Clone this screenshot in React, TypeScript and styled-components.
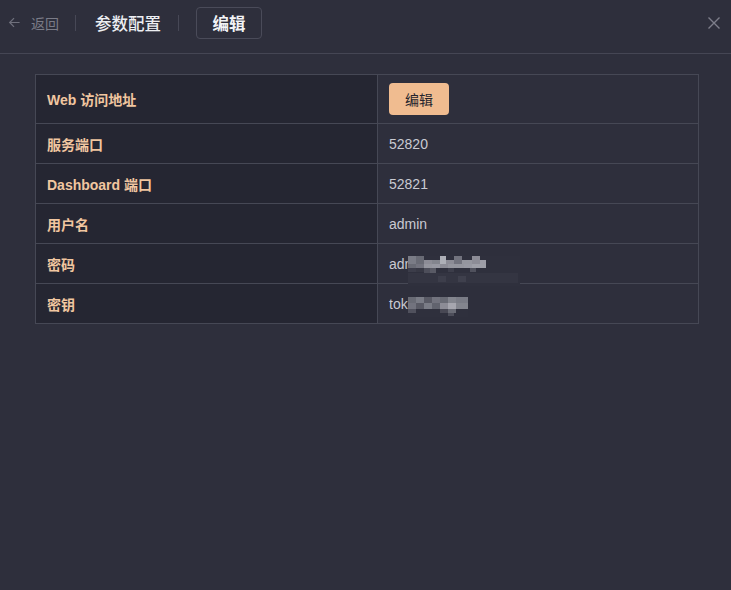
import React from "react";
import styled, { createGlobalStyle } from "styled-components";

const Global = createGlobalStyle`
  html, body { margin: 0; padding: 0; background: #2e2f3c; }
  body { font-family: "Liberation Sans", "Noto Sans CJK SC", sans-serif; }
  * { box-sizing: border-box; }
`;

const Page = styled.div`
  width: 731px;
  height: 590px;
  background: #2e2f3c;
  display: flex;
  flex-direction: column;
`;

const Header = styled.div`
  height: 54px;
  border-bottom: 1px solid #454654;
  display: flex;
  align-items: center;
  padding: 0 10px 8px 8px;
`;

const Back = styled.div`
  display: flex;
  align-items: center;
  gap: 10px;
  color: #7b7c88;
  font-size: 14px;
  font-family: "Noto Sans CJK SC", sans-serif;
`;

const Divider = styled.div<{ $l: number; $r: number }>`
  width: 1px;
  height: 16px;
  background: #474856;
  margin: 0 ${(p) => p.$r}px 0 ${(p) => p.$l}px;
`;

const Title = styled.div`
  color: #eceef2;
  font-size: 16.5px;
  font-weight: 500;
  font-family: "Noto Sans CJK SC", sans-serif;
`;

const Tab = styled.div`
  width: 66px;
  height: 32px;
  border: 1px solid #4a4b59;
  border-radius: 4px;
  display: flex;
  align-items: center;
  justify-content: center;
  color: #f2f3f6;
  font-size: 16.5px;
  font-weight: 700;
  font-family: "Noto Sans CJK SC", sans-serif;
`;

const Close = styled.div`
  margin-left: auto;
  display: flex;
  align-items: center;
`;

const Body = styled.div`
  padding: 20px 32px 0 35px;
`;

const Table = styled.div`
  width: 664px;
  border: 1px solid #464855;
  border-bottom: none;
  display: grid;
  grid-template-columns: 342px 1fr;
`;

const Label = styled.div<{ $h: number }>`
  height: ${(p) => p.$h}px;
  background: #252632;
  border-right: 1px solid #464855;
  border-bottom: 1px solid #464855;
  display: flex;
  align-items: center;
  padding-left: 11px;
  color: #f1c6a0;
  font-size: 14px;
  font-weight: 700;
`;

const Value = styled.div<{ $h: number }>`
  position: relative;
  height: ${(p) => p.$h}px;
  border-bottom: 1px solid #464855;
  display: flex;
  align-items: center;
  padding-left: 11px;
  color: #c9cad2;
  font-size: 14px;
`;

const EditButton = styled.button`
  width: 60px;
  height: 32px;
  border: none;
  border-radius: 4px;
  background: #f0bc90;
  color: #24252e;
  font-family: "Noto Sans CJK SC", sans-serif;
  font-size: 14px;
  cursor: pointer;
`;

const Mosaic = styled.svg`
  position: absolute;
  display: block;
`;

type Block = [number, number, number, number, number];

const pwBlocks: Block[] = [
  [0, 0, 8, 8, 0.45], [8, 0, 8, 8, 0.35], [16, 4, 8, 4, 0.55], [24, 4, 8, 4, 0.5],
  [32, 0, 6, 8, 0.75], [38, 4, 8, 4, 0.55], [46, 0, 8, 8, 0.4], [54, 4, 10, 4, 0.6],
  [64, 0, 8, 8, 0.55], [72, 4, 6, 4, 0.65], [0, 8, 8, 4, 0.35], [8, 8, 8, 4, 0.4],
  [16, 8, 8, 4, 0.6], [24, 8, 8, 4, 0.62], [32, 8, 8, 4, 0.55], [40, 8, 8, 4, 0.6],
  [48, 8, 8, 4, 0.6], [56, 8, 8, 4, 0.62], [64, 8, 14, 4, 0.66],
  [0, 12, 8, 4, 0.08], [8, 12, 8, 4, 0.05], [16, 12, 6, 5, 0.18], [22, 12, 6, 5, 0.25],
  [40, 12, 6, 4, 0.08], [62, 12, 6, 4, 0.2],
  [0, 17, 110, 10, 0.03], [30, 20, 8, 6, 0.06], [50, 20, 8, 6, 0.07],
];

const tkBlocks: Block[] = [
  [0, 0, 8, 6, 0.35], [8, 0, 8, 6, 0.45], [16, 0, 8, 6, 0.25], [24, 0, 8, 6, 0.4],
  [32, 0, 8, 6, 0.35], [40, 0, 8, 6, 0.5], [48, 0, 12, 6, 0.45],
  [0, 6, 8, 6, 0.4], [8, 6, 8, 6, 0.25], [16, 6, 8, 6, 0.45], [24, 6, 8, 6, 0.3],
  [32, 6, 8, 6, 0.55], [40, 6, 8, 6, 0.7], [48, 6, 12, 6, 0.5],
  [0, 12, 8, 4, 0.2], [32, 12, 8, 4, 0.15], [40, 12, 8, 4, 0.35], [40, 16, 6, 3, 0.18],
];

function Blocks({ blocks, w, h, style }: { blocks: Block[]; w: number; h: number; style: React.CSSProperties }) {
  return (
    <Mosaic width={w} height={h} viewBox={`0 0 ${w} ${h}`} style={style}>
      <rect x={0} y={0} width={w} height={h} fill="#2f303d" />
      {blocks.map(([x, y, bw, bh, l], i) => (
        <rect key={i} x={x} y={y} width={bw} height={bh} fill="#d8d9e0" fillOpacity={l} />
      ))}
    </Mosaic>
  );
}

const rows = [
  { label: "Web 访问地址", h: 49, kind: "button" },
  { label: "服务端口", h: 40, value: "52820" },
  { label: "Dashboard 端口", h: 40, value: "52821" },
  { label: "用户名", h: 40, value: "admin" },
  { label: "密码", h: 40, kind: "pw" },
  { label: "密钥", h: 40, kind: "tk" },
];

export default function App() {
  return (
    <Page>
      <Global />
      <Header>
        <Back>
          <svg width="13" height="13" viewBox="0 0 14 14" fill="none" stroke="#6f707c" strokeWidth="1.3">
            <path d="M12.5 7H1.8M6.5 2.3L1.8 7l4.7 4.7" />
          </svg>
          <span>返回</span>
        </Back>
        <Divider $l={16} $r={19} />
        <Title>参数配置</Title>
        <Divider $l={17} $r={17} />
        <Tab>编辑</Tab>
        <Close>
          <svg width="14" height="14" viewBox="0 0 14 14" stroke="#7d7e8a" strokeWidth="1.4">
            <path d="M1.5 1.5l11 11M12.5 1.5l-11 11" />
          </svg>
        </Close>
      </Header>
      <Body>
        <Table>
          {rows.map((r) => (
            <React.Fragment key={r.label}>
              <Label $h={r.h}>{r.label}</Label>
              <Value $h={r.h}>
                {r.kind === "button" && <EditButton>编辑</EditButton>}
                {r.value}
                {r.kind === "pw" && (
                  <>
                    adm
                    <Blocks blocks={pwBlocks} w={112} h={30} style={{ left: 30, top: 12 }} />
                  </>
                )}
                {r.kind === "tk" && (
                  <>
                    tok
                    <Blocks blocks={tkBlocks} w={60} h={20} style={{ left: 30, top: 13 }} />
                  </>
                )}
              </Value>
            </React.Fragment>
          ))}
        </Table>
      </Body>
    </Page>
  );
}
